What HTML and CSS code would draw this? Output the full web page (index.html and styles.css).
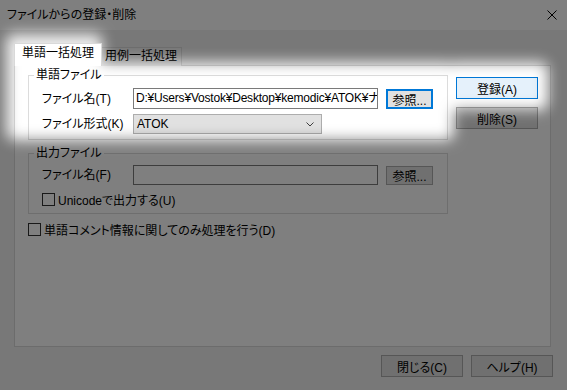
FILE: index.html
```html
<!DOCTYPE html>
<html lang="ja">
<head>
  <meta charset="UTF-8">
  <title>ファイルからの登録・削除</title>
  <link rel="stylesheet" href="styles.css">
</head>
<body>
  <div class="dialog">
    <div class="titlebar">
      <span class="title">ファイルからの登録・削除</span>
      <svg class="close" width="10" height="10" viewBox="0 0 10 10"><path d="M0.5 0.5L9.5 9.5M9.5 0.5L0.5 9.5" stroke="#000" stroke-width="1" fill="none"/></svg>
    </div>

    <div class="content">
      <div class="tabs">
        <div class="tab active">単語一括処理</div>
        <div class="tab">用例一括処理</div>
      </div>

      <div class="panel">
        <div class="groups">
          <fieldset class="group">
            <legend>単語ファイル</legend>
            <div class="rows">
              <label>ファイル名(T)</label>
              <div class="field path">D:¥Users¥Vostok¥Desktop¥kemodic¥ATOK¥ナ</div>
              <button class="btn small focus">参照...</button>
              <label>ファイル形式(K)</label>
              <div class="select">
                <span>ATOK</span>
                <svg width="8" height="5" viewBox="0 0 8 5"><path d="M0.5 0.5L4 4L7.5 0.5" stroke="#404040" fill="none"/></svg>
              </div>
            </div>
          </fieldset>

          <fieldset class="group">
            <legend>出力ファイル</legend>
            <div class="rows rows-out">
              <label>ファイル名(F)</label>
              <div class="field"></div>
              <button class="btn small">参照...</button>
              <div class="check wide"><span class="box"></span>Unicodeで出力する(U)</div>
            </div>
          </fieldset>

          <div class="check single"><span class="box"></span>単語コメント情報に関してのみ処理を行う(D)</div>
        </div>

        <div class="side">
          <button class="btn default">登録(A)</button>
          <button class="btn">削除(S)</button>
        </div>
      </div>

      <div class="footer">
        <button class="btn">閉じる(C)</button>
        <button class="btn">ヘルプ(H)</button>
      </div>
    </div>

    <!-- spotlight over the first group -->
    <svg class="spot" width="567" height="390">
      <defs>
        <filter id="soft" filterUnits="userSpaceOnUse" x="0" y="0" width="567" height="390">
          <feGaussianBlur stdDeviation="7"/>
        </filter>
        <mask id="hole" maskUnits="userSpaceOnUse" x="0" y="0" width="567" height="390">
          <rect width="567" height="390" fill="#fff"/>
          <g filter="url(#soft)" fill="#000">
            <rect x="6" y="34" width="96" height="40" rx="6"/>
            <rect x="6" y="62" width="448" height="78" rx="8"/>
            <rect x="448" y="62" width="100" height="48" rx="8"/>
          </g>
        </mask>
      </defs>
      <rect width="567" height="390" fill="#000" fill-opacity="0.5" mask="url(#hole)"/>
    </svg>
  </div>
</body>
</html>
```

FILE: styles.css
```css
* { box-sizing: border-box; }
body {
  margin: 0;
  font-family: "Liberation Sans", "Noto Sans CJK JP", sans-serif;
  font-size: 12px;
  font-feature-settings: "palt";
  color: #000;
  background: #f0f0f0;
}
.dialog {
  position: relative;
  width: 567px;
  height: 390px;
  overflow: hidden;
  background: #f0f0f0;
}
.titlebar {
  height: 30px;
  background: #fff;
  display: flex;
  align-items: center;
  justify-content: space-between;
  padding: 0 10px 0 7px;
}
.title { line-height: 16px; }
.content { padding: 13px 16px 0 14px; }

.tabs {
  display: flex;
  align-items: flex-end;
  height: 23px;
}
.tab {
  width: 80px;
  height: 19px;
  padding: 0 0 0 3px;
  line-height: 16px;
  white-space: nowrap;
  background: #f0f0f0;
  border: 1px solid #d9d9d9;
  border-left: none;
  border-bottom: none;
}
.tab.active {
  position: relative;
  z-index: 1;
  width: 88px;
  height: 23px;
  padding: 1px 0 0 7px;
  background: #fff;
  border-left: 1px solid #d9d9d9;
}

.panel {
  margin-top: -1px;
  height: 282px;
  display: flex;
  gap: 8px;
  padding: 1px 0 0 13px;
  background: #fff;
  border: 1px solid #d9d9d9;
}
.groups { width: 420px; }
.group {
  margin: 0;
  padding: 0;
  min-width: 0;
  border: 1px solid #dcdcdc;
}
.group + .group { margin-top: 5px; }
legend {
  margin-left: 5px;
  padding: 0 2px;
  line-height: 16px;
}
.rows {
  display: grid;
  grid-template-columns: 83px 245px 47px;
  column-gap: 8px;
  row-gap: 5px;
  align-items: center;
  padding: 5px 0 5px 13px;
}
.rows-out {
  row-gap: 4px;
  padding: 4px 0 4px 13px;
}
label { line-height: 16px; white-space: nowrap; }

.field {
  height: 21px;
  padding: 0 2px;
  line-height: 19px;
  white-space: nowrap;
  overflow: hidden;
  background: #fff;
  border: 1px solid #7a7a7a;
}
.field.path { letter-spacing: -0.2px; }
.rows-out .field { height: 20px; }
.select {
  grid-column: 2 / 3;
  width: 189px;
  height: 20px;
  display: flex;
  align-items: center;
  justify-content: space-between;
  padding: 0 7px 0 3px;
  background: #e1e1e1;
  border: 1px solid #adadad;
}

.btn {
  width: 82px;
  height: 22px;
  padding: 0;
  font: inherit;
  color: #000;
  background: #e1e1e1;
  border: 1px solid #adadad;
}
.btn.small { width: 47px; height: 20px; }
.rows-out .btn.small { height: 19px; }
.btn.focus { border: 2px solid #0078d7; }
.btn.default {
  background: #e5f1fb;
  border-color: #0078d7;
}

.check {
  display: flex;
  align-items: center;
  gap: 3px;
  height: 20px;
  white-space: nowrap;
}
.check.wide { grid-column: 1 / -1; }
.check.single { margin-top: 5px; }
.box {
  width: 13px;
  height: 13px;
  background: #fff;
  border: 1px solid #333;
}

.side {
  display: flex;
  flex-direction: column;
  gap: 8px;
  padding-top: 10px;
}
.footer {
  display: flex;
  justify-content: flex-end;
  gap: 8px;
  margin-right: -2px;
  padding-top: 8px;
}

.spot {
  position: absolute;
  top: 0;
  left: 0;
  pointer-events: none;
}
```
